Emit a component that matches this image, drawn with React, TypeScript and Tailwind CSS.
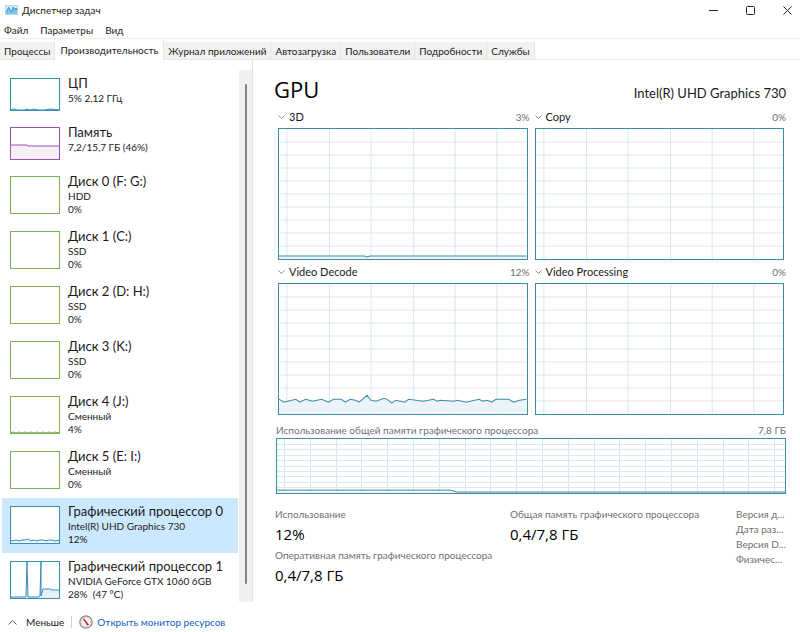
import React, { FC, useState } from "react";
import { clsx } from "clsx";

interface Device {
  name: string;
  lines: string[];
  color: string;
  fill?: string;
  graph?: string;
}

interface ChartProps {
  line?: string;
  columns: number[];
  height: number;
  width: number;
  className: string;
}

const tabs = [
  "Процессы",
  "Производительность",
  "Журнал приложений",
  "Автозагрузка",
  "Пользователи",
  "Подробности",
  "Службы",
];

const devices: Device[] = [
  {
    name: "ЦП",
    lines: ["5% 2,12 ГГц"],
    color: "#3a8db5",
    fill: "#b5d7e8",
    graph: "0,32 3,31 5,31 7,32 14,32 17,31 20,32 24,31 28,32 34,32 40,31 50,32",
  },
  {
    name: "Память",
    lines: ["7,2/15,7 ГБ (46%)"],
    color: "#9b4fae",
    fill: "#f4f0f6",
    graph: "0,18 17,18 18,19 50,19",
  },
  { name: "Диск 0 (F: G:)", lines: ["HDD", "0%"], color: "#77b255" },
  { name: "Диск 1 (C:)", lines: ["SSD", "0%"], color: "#77b255" },
  { name: "Диск 2 (D: H:)", lines: ["SSD", "0%"], color: "#77b255" },
  { name: "Диск 3 (K:)", lines: ["SSD", "0%"], color: "#77b255" },
  {
    name: "Диск 4 (J:)",
    lines: ["Сменный", "4%"],
    color: "#77b255",
    fill: "#cfe5c0",
    graph:
      "0,37 3,36 6,37 9,36 12,37 15,36 18,37 21,36 24,37 27,36 30,37 33,36 36,37 39,36 42,37 45,36 50,37",
  },
  { name: "Диск 5 (E: I:)", lines: ["Сменный", "0%"], color: "#77b255" },
  {
    name: "Графический процессор 0",
    lines: ["Intel(R) UHD Graphics 730", "12%"],
    color: "#3a8db5",
    fill: "#eef4fa",
    graph:
      "0,34 3,35 6,34 9,35 12,34 15,34 18,33 21,35 24,34 27,35 30,34 33,34 36,35 39,34 42,34 45,35 50,34",
  },
  {
    name: "Графический процессор 1",
    lines: ["NVIDIA GeForce GTX 1060 6GB", "28%  (47 °C)"],
    color: "#3a8db5",
    fill: "#e6f0f8",
    graph: "0,36 16,36 17,1 18,36 29,36 30,34 31,1 31,35 33,28 40,28 42,29 50,29",
  },
];

const decodeLine =
  "0,117 5,120 17,117 21,120 27,117 34,119 43,117 50,120 55,117 63,117 67,120 72,117 77,118 81,120 89,113 93,118 98,119 106,116 109,117 114,121 118,118 127,120 131,117 146,119 156,117 160,119 163,118 177,119 180,118 189,120 202,117 206,119 210,118 215,120 219,117 232,117 237,120 243,118 250,117";

const chartColumns = [8, 51, 93, 136, 178, 220];
const memoryColumns = Array.from({ length: 20 }, (_, i) => Math.round(8 + i * 25.8));

const engines = [
  { name: "3D", usage: "3%", line: "0,129 86,129 89,130 92,129 250,129" },
  { name: "Copy", usage: "0%" },
  { name: "Video Decode", usage: "12%", line: decodeLine },
  { name: "Video Processing", usage: "0%" },
];

const Chart: FC<ChartProps> = ({ line, columns, width, height, className }) => (
  <svg
    viewBox={`0 0 ${width} ${height}`}
    preserveAspectRatio="none"
    className={clsx("block w-full border border-[#3f8bab] bg-white", className)}
  >
    <g stroke="#dbe7ee" shapeRendering="crispEdges">
      {columns.map((x) => (
        <line key={x} x1={x} x2={x} y1="0" y2={height} vectorEffect="non-scaling-stroke" />
      ))}
      {[1, 2, 3, 4, 5, 6, 7, 8, 9].map((n) => (
        <line
          key={n}
          x1="0"
          x2={width}
          y1={(height * n) / 10}
          y2={(height * n) / 10}
          vectorEffect="non-scaling-stroke"
        />
      ))}
    </g>
    {line && (
      <>
        <polygon points={`0,${height} ${line} ${width},${height}`} fill="#e9f2f9" fillOpacity="0.85" />
        <polyline points={line} fill="none" stroke="#3f8bab" vectorEffect="non-scaling-stroke" />
      </>
    )}
  </svg>
);

const Thumbnail: FC<{ device: Device }> = ({ device }) => {
  const height = device.lines.length > 1 ? 38 : 33;
  return (
    <svg width="50" height={height} viewBox={`0 0 50 ${height}`} className="mt-[3px] shrink-0">
      <rect width="50" height={height} fill="#fff" />
      {device.graph && (
        <>
          <polygon points={`0,${height} ${device.graph} 50,${height}`} fill={device.fill} />
          <polyline points={device.graph} fill="none" stroke={device.color} strokeLinejoin="bevel" />
        </>
      )}
      <rect x="0.5" y="0.5" width="49" height={height - 1} fill="none" stroke={device.color} />
    </svg>
  );
};

const TitleBar = () => (
  <header className="flex h-5 items-center justify-between pr-2 pl-[5px]">
    <div className="flex items-center gap-1">
      <svg width="13" height="10" viewBox="0 0 13 10">
        <rect x="0.5" y="0.5" width="12" height="9" fill="#d8effb" stroke="#b5d8ea" />
        <path d="M1 9V6l1.5-1 1-3 1.5 3 2 1 1-4 2 3 1-2 1 2v4z" fill="#7cc4ea" />
        <path d="M1 6.5L2.5 5l1-3L5 5l2 1.500 1-4.500 2 3 1-2 1 2" fill="none" stroke="#3c94cc" />
      </svg>
      <h1>Диспетчер задач</h1>
    </div>
    <div className="flex items-center gap-7">
      <button type="button" aria-label="Свернуть">
        <svg width="9" height="9" viewBox="0 0 9 9" stroke="#222">
          <path d="M0 4.5h9" />
        </svg>
      </button>
      <button type="button" aria-label="Развернуть">
        <svg width="9" height="9" viewBox="0 0 9 9" fill="none" stroke="#222">
          <rect x="0.5" y="0.5" width="8" height="8" rx="1" />
        </svg>
      </button>
      <button type="button" aria-label="Закрыть">
        <svg width="9" height="9" viewBox="0 0 9 9" stroke="#222">
          <path d="M0.5 0.5l8 8M8.5 0.5l-8 8" />
        </svg>
      </button>
    </div>
  </header>
);

const App = () => {
  const [activeTab, setActiveTab] = useState("Производительность");
  const [selected, setSelected] = useState("Графический процессор 0");

  return (
    <div className="flex h-screen flex-col bg-white font-['Lato','Open_Sans',sans-serif] text-[10px] text-[#1a1a1a]">
      <TitleBar />
      <nav className="flex h-[19px] items-end gap-3 border-b border-[#efefef] pl-1">
        {["Файл", "Параметры", "Вид"].map((item) => (
          <button key={item} type="button">
            {item}
          </button>
        ))}
      </nav>

      <div className="flex h-[21px] items-end border-b border-[#e8e8e8]" role="tablist">
        {tabs.map((tab) => (
          <button
            key={tab}
            type="button"
            role="tab"
            aria-selected={tab === activeTab}
            onClick={() => setActiveTab(tab)}
            className={clsx(
              "border-r border-[#e5e5e5]",
              tab === activeTab ? "-mb-px h-5 bg-white px-[5px]" : "h-[17px] bg-[#f2f2f2] px-1 pt-0.5"
            )}
          >
            {tab}
          </button>
        ))}
      </div>

      <main className="flex min-h-0 flex-1">
        <aside className="flex w-[253px] shrink-0 border-r border-[#e3e3e3] pt-[10px]">
          <ul className="min-w-0 flex-1 overflow-y-auto pl-0.5 [scrollbar-width:none]">
            {devices.map((device) => (
              <li key={device.name}>
                <button
                  type="button"
                  onClick={() => setSelected(device.name)}
                  className={clsx(
                    "flex w-full items-start gap-2 pt-[5px] pl-2 text-left",
                    device.lines.length > 1 ? "pb-[7px]" : "pb-2",
                    device.name === selected && "bg-[#cce8ff]"
                  )}
                >
                  <Thumbnail device={device} />
                  <span className="flex flex-col whitespace-pre">
                    <span className="text-[13px] leading-[17px]">{device.name}</span>
                    {device.lines.map((line) => (
                      <span key={line} className="leading-[13px]">
                        {line}
                      </span>
                    ))}
                  </span>
                </button>
              </li>
            ))}
          </ul>
          <div className="ml-px flex w-[13px] justify-center bg-[#f0f0f0] pt-[14px] pb-[18px]">
            <div className="w-0.5 rounded-full bg-[#858585]" />
          </div>
        </aside>

        <section className="min-w-0 flex-1 pt-3 pr-[14px] pl-[21px]">
          <div className="flex h-9 items-center justify-between">
            <h2 className="pb-0.5 font-['Open_Sans',sans-serif] text-[22px] text-black">GPU</h2>
            <p className="pt-2 text-[13px]">Intel(R) UHD Graphics 730</p>
          </div>

          <div className="grid grid-cols-2 gap-x-[7px] pr-0.5 pl-1">
            {engines.map((engine) => (
              <div key={engine.name}>
                <div className="-mr-0.5 flex h-5 items-center justify-between pb-0.5">
                  <button type="button" className="flex items-center gap-1 text-[11px]">
                    <svg width="7" height="4" viewBox="0 0 7 4" fill="none" stroke="#888">
                      <path d="M0.5 0.5l3 3 3-3" />
                    </svg>
                    {engine.name}
                  </button>
                  <span className="text-[#707070]">{engine.usage}</span>
                </div>
                <Chart
                  line={engine.line}
                  columns={chartColumns}
                  width={250}
                  height={132}
                  className="mb-[3px] h-[132px]"
                />
              </div>
            ))}
          </div>

          <div className="pl-0.5">
            <div className="mt-1 flex h-4 items-center justify-between text-[#707070]">
              <span>Использование общей памяти графического процессора</span>
              <span>7,8 ГБ</span>
            </div>
            <Chart
              line="0,53 174,53 180,55 509,55"
              columns={memoryColumns}
              width={509}
              height={56}
              className="h-[56px]"
            />
          </div>

          <div className="mt-[13px] flex justify-between pl-px leading-[15px] text-[#707070]">
            <dl className="w-[235px]">
              <dt>Использование</dt>
              <dd className="mb-0.5 font-['Open_Sans',sans-serif] text-[15px] leading-6 text-black">12%</dd>
              <dt>Оперативная память графического процессора</dt>
              <dd className="font-['Open_Sans',sans-serif] text-[15px] leading-6 text-black">0,4/7,8 ГБ</dd>
            </dl>
            <dl className="flex-1">
              <dt>Общая память графического процессора</dt>
              <dd className="font-['Open_Sans',sans-serif] text-[15px] leading-6 text-black">0,4/7,8 ГБ</dd>
            </dl>
            <ul className="w-[50px] whitespace-nowrap">
              <li>Версия д...</li>
              <li>Дата раз...</li>
              <li>Версия D...</li>
              <li>Физичес...</li>
            </ul>
          </div>
        </section>
      </main>

      <footer className="flex h-[30px] items-center gap-[7px] pt-[10px] pl-2">
        <button type="button" className="flex items-center gap-[9px]">
          <svg width="9" height="5" viewBox="0 0 9 5" fill="none" stroke="#555">
            <path d="M0.5 4.5l4-4 4 4" />
          </svg>
          Меньше
        </button>
        <span className="h-3 w-px bg-[#d0d0d0]" />
        <a href="#resmon" className="flex items-center gap-1 text-[#0a63bd]">
          <svg width="14" height="14" viewBox="0 0 14 14">
            <circle cx="7" cy="7" r="6.2" fill="#f6f3ee" stroke="#8a8a8a" strokeWidth="1.2" />
            <circle cx="7" cy="7" r="4.600" fill="none" stroke="#a9a9a9" strokeDasharray="1 1.400" />
            <path d="M3.500 3.500l1.600 0.300 4.900 6-1.800 0.700z" fill="#c5282f" />
          </svg>
          Открыть монитор ресурсов
        </a>
      </footer>
    </div>
  );
};

export default App;
